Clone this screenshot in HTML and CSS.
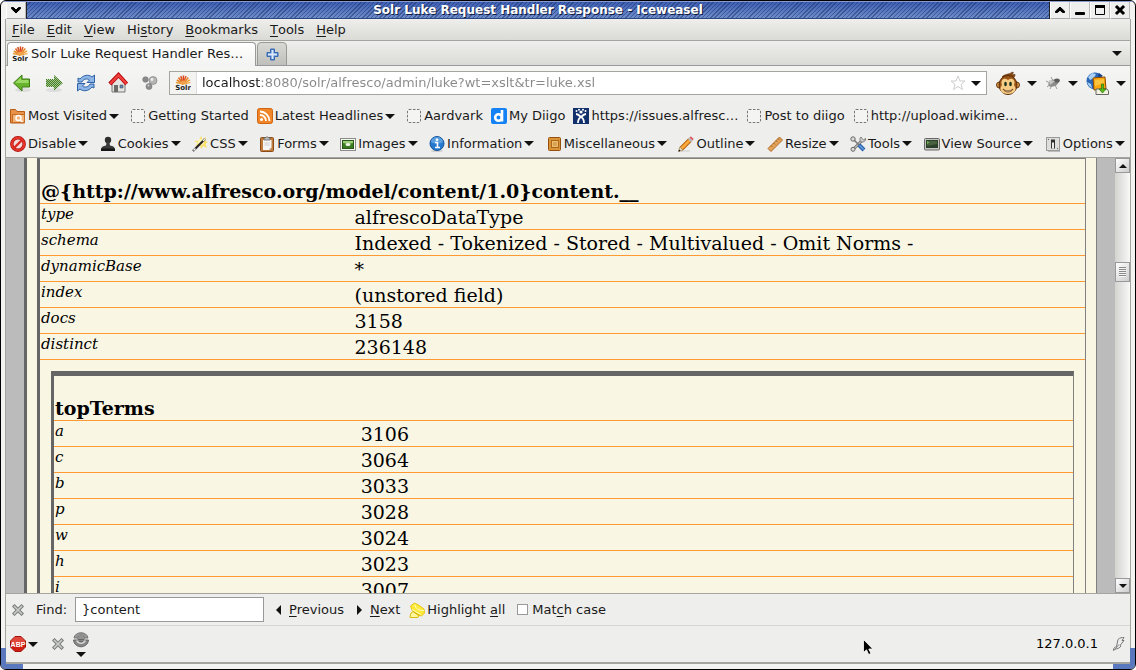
FILE: index.html
```html
<!DOCTYPE html>
<html lang="en">
<head>
<meta charset="utf-8">
<title>Solr Luke Request Handler Response - Iceweasel</title>
<link rel="stylesheet" href="styles.css">
</head>
<body>
<svg class="defs" aria-hidden="true">
  <symbol id="solr" viewBox="0 0 16 16">
    <g stroke-width="1.500" stroke-linecap="butt">
      <path d="M8 9L1 7.500" stroke="#e8a33a"/><path d="M8 9L1.800 5" stroke="#e58a2c"/>
      <path d="M8 9L3.500 2.500" stroke="#df6a24"/><path d="M8 9L5.800 1" stroke="#d9531e"/>
      <path d="M8 9L8.500 .5" stroke="#d9411e"/><path d="M8 9L11 1" stroke="#df5a22"/>
      <path d="M8 9L13.300 2.500" stroke="#e8812a"/><path d="M8 9L15 4.800" stroke="#f0a13a"/>
      <path d="M8 9L15.500 7.500" stroke="#f4b860"/>
    </g>
    <path d="M5 9a3.500 3.500 0 0 1 7 0z" fill="#f2a04a"/>
    <text x="8" y="15" class="solr-text">Solr</text>
  </symbol>
  <symbol id="blank" viewBox="0 0 16 16"><rect x="1.500" y="1.500" width="13" height="13" rx="1.500" fill="#f4f4f3" stroke="#777" stroke-dasharray="2.500 1.500"/></symbol>
  <symbol id="cross" viewBox="0 0 12 12"><path d="M2.500 2.500l7 7M9.500 2.500l-7 7" stroke="#777b76" stroke-width="3.600" stroke-linecap="square"/><path d="M2.500 2.500l7 7M9.500 2.500l-7 7" stroke="#c9ccc8" stroke-width="1.600" stroke-linecap="square"/></symbol>
</svg>
<div class="window">
  <header class="titlebar">
    <button class="wm" aria-label="Window menu"><svg width="12" height="8" viewBox="0 0 12 8"><path d="M1.500 1.500h2L6 4l2.500-2.500h2v1.200L6 7 1.500 2.700z" fill="#000" stroke="#000"/></svg></button>
    <h1 class="title">Solr Luke Request Handler Response - Iceweasel</h1>
    <div class="wm-group">
      <button class="wm" aria-label="Shade"><svg width="12" height="8" viewBox="0 0 12 8"><path d="M1.500 6.500h2L6 4.200l2.500 2.300h2V5.200L6 1 1.500 5.200z" fill="#000" stroke="#000"/></svg></button>
      <button class="wm" aria-label="Minimize"><svg width="12" height="12" viewBox="0 0 12 12"><rect x="1" y="8" width="10" height="3" rx="1"/></svg></button>
      <button class="wm" aria-label="Maximize"><svg width="12" height="12" viewBox="0 0 12 12"><path d="M1.500 1.500h9v9h-9z" fill="#eee" stroke="#000"/><path d="M1 1h10v3H1z"/></svg></button>
      <button class="wm" aria-label="Close"><svg width="12" height="12" viewBox="0 0 12 12"><path d="M3 3l6 6M9 3l-6 6" stroke="#000" stroke-width="3" stroke-linecap="square"/></svg></button>
    </div>
  </header>

  <div class="client">
    <nav class="menubar" aria-label="Menu">
      <button><u>F</u>ile</button><button><u>E</u>dit</button><button><u>V</u>iew</button><button>Hi<u>s</u>tory</button><button><u>B</u>ookmarks</button><button><u>T</u>ools</button><button><u>H</u>elp</button>
    </nav>

    <div class="tabbar">
      <button class="tab"><svg class="i16"><use href="#solr"/></svg><span>Solr Luke Request Handler Res…</span></button>
      <button class="newtab" aria-label="New tab"><svg width="13" height="13" viewBox="0 0 13 13"><path d="M4.500 1h4v3.500H12v4H8.500V12h-4V8.500H1v-4h3.500z" fill="#4a7fc8" stroke="#3668b0"/><path d="M6.500 2v9M2 6.500h9" stroke="#dce9fa" stroke-width="2"/></svg></button>
      <button class="alltabs" aria-label="List all tabs"><i class="down"></i></button>
    </div>

    <div class="navbar">
      <div class="navbuttons">
        <button aria-label="Back"><svg width="20" height="20" viewBox="0 0 20 20"><ellipse cx="11" cy="17" rx="8" ry="2" fill="#ddd"/><path d="M1.500 10L10 2v4h7.500v8H10v4z" fill="#67b32e" stroke="#3c7a12"/><path d="M3 10l6-5.800v2.800h7.500v3z" fill="#9bd863"/></svg></button>
        <button aria-label="Forward"><svg width="20" height="20" viewBox="0 0 20 20"><defs><pattern id="dots" width="2" height="2" patternUnits="userSpaceOnUse"><path d="M0 0h1v1H0zM1 1h1v1H1z" fill="#3f7c22"/></pattern></defs><ellipse cx="10" cy="17" rx="8" ry="2" fill="#ddd"/><path d="M18.500 10L10 2.500v4H2v7h8v4z" fill="#a5c68f"/><path d="M19 10L10 2v4H2v8h8v4z" fill="url(#dots)"/></svg></button>
        <button aria-label="Reload"><svg width="20" height="20" viewBox="0 0 20 20"><g id="half"><path d="M2 9V5l2 1c3-4 9-5 12-2l2.500-2v7.500H11L13.500 7C11 5 7 6 6 9z" fill="#8db6e6" stroke="#2f62a8"/></g><use href="#half" transform="rotate(180 10 10)"/></svg></button>
        <button aria-label="Home"><svg width="20" height="22" viewBox="0 0 20 22"><path d="M4 10v10h13V10l-6-6z" fill="#e5e5e2" stroke="#777"/><path d="M6 13h4v7H6z" fill="#6c6c68"/><path d="M12 13h3v3h-3z" fill="#5b86bd" stroke="#555" stroke-width=".6"/><path d="M1.800 12L10.500 3l8.200 9" fill="none" stroke="#b8060a" stroke-width="4"/><path d="M2.200 11.800L10.500 3.200l8 8.500" fill="none" stroke="#f1413f" stroke-width="2.200"/></svg></button>
        <button aria-label="Scatter"><svg width="20" height="20" viewBox="0 0 20 20"><g stroke="#777" stroke-width=".6"><circle cx="5.500" cy="6.500" r="2.800" fill="#8a8a8a"/><circle cx="13" cy="7.500" r="4" fill="#b5b5b5"/><circle cx="9" cy="13.500" r="3" fill="#8d8d8d"/></g><circle cx="12" cy="6.500" r="1.400" fill="#eee"/><circle cx="8.500" cy="12.500" r="1" fill="#ccc"/></svg></button>
      </div>
      <div class="urlbox">
        <span class="favicon"><svg class="i16"><use href="#solr"/></svg></span>
        <input class="url" aria-label="Location" value="localhost:8080/solr/alfresco/admin/luke?wt=xslt&amp;tr=luke.xsl">
        <button aria-label="Bookmark this page"><svg width="16" height="16" viewBox="0 0 16 16"><path d="M8 1l2 5h5l-4 3.500 1.500 5L8 11.500l-4.500 3L5 9.500 1 6h5z" fill="#fff" stroke="#ccc"/></svg></button>
        <button aria-label="Show history"><i class="down"></i></button>
      </div>
      <div class="addons">
        <button class="addon" aria-label="Greasemonkey"><svg width="24" height="25" viewBox="0 0 24 25"><path d="M6 6c2-3 6-2 11-5 1 1-1 2-1 3l3-.5c0 2-1 2-1 3z" fill="#8a4b14" stroke="#5b2e08" stroke-width=".7"/><circle cx="3.500" cy="14" r="3" fill="#dc9d54" stroke="#6a3508"/><circle cx="20.500" cy="14" r="3" fill="#dc9d54" stroke="#6a3508"/><ellipse cx="12" cy="14" rx="9" ry="9.500" fill="#9a5416" stroke="#5b2e08"/><path d="M12 9c4-3 8 0 6 5 4 5 0 9-6 9s-10-4-6-9c-2-5 2-8 6-5z" fill="#f5cd86"/><ellipse cx="9.500" cy="13" rx="1.300" ry="2.200" fill="#18331a"/><ellipse cx="14.500" cy="13" rx="1.300" ry="2.200" fill="#18331a"/><path d="M7 18c3 2.500 7 2.500 10 0-2 4-8 4-10 0z" fill="#fff" stroke="#6a3508" stroke-width=".8"/></svg><i class="down"></i></button>
        <button class="addon" aria-label="Firebug"><svg width="16" height="16" viewBox="0 0 16 16"><path d="M1 6l4 2M2 12l4-3M5 14l2-4M12 14l-2-4M6 2l2 4" stroke="#999"/><ellipse cx="8.500" cy="8" rx="5.500" ry="3.300" transform="rotate(-25 8.500 8)" fill="#8c8c8c"/><ellipse cx="12" cy="5.500" rx="2.800" ry="2" fill="#5c5c5c"/><path d="M4 5l6 1-5 4z" fill="#c7c7c7"/></svg><i class="down"></i></button>
        <button class="addon" aria-label="Download helper"><svg width="23" height="23" viewBox="0 0 23 23"><circle cx="9" cy="9" r="8.500" fill="#2a65b5"/><path d="M2 5l4-4 4 1-2 4-4 2zM1 10l4 2 1 4-3-2z" fill="#a9d0f0"/><path d="M13 1l4 3-5 1z" fill="#153f87"/><path d="M7 6l12-1 1 12-12 1z" fill="#fba70d" stroke="#8c4b00"/><path d="M9 8l9-1v4l-9 3z" fill="#ffc33c"/><path d="M10 17h11l1.500 2v3.500H10z" fill="#f4f3df" stroke="#666"/><path d="M15.500 12h2v5h2.500l-3.500 4-3.500-4h2.500z" fill="#57ba1c" stroke="#2c7208" stroke-width=".7"/></svg><i class="down"></i></button>
      </div>
    </div>

    <nav class="toolbar bookmarks" aria-label="Bookmarks">
      <button class="has-menu"><svg class="i16" viewBox="0 0 16 16"><path d="M.5 15V1.500h5l1.500 2h7.500V15z" fill="#e7924a" stroke="#bb5c12"/><path d="M2.500 6.500h12v8h-12z" fill="#f3b47a" stroke="#c46a22"/><circle cx="8.500" cy="10" r="2.500" fill="none" stroke="#fff" stroke-width="1.400"/><path d="M10.500 12l2 2" stroke="#fff" stroke-width="1.500"/></svg>Most Visited<i class="down"></i></button>
      <a href="#"><svg class="i16"><use href="#blank"/></svg>Getting Started</a>
      <button class="has-menu"><svg class="i16" viewBox="0 0 16 16"><rect x=".5" y=".5" width="15" height="15" rx="2" fill="#f08628" stroke="#cf6510"/><circle cx="4.500" cy="11.500" r="1.500" fill="#fff"/><path d="M3 7a6 6 0 0 1 6 6M3 3.500A9.500 9.500 0 0 1 12.500 13" fill="none" stroke="#fff" stroke-width="1.800"/></svg>Latest Headlines<i class="down"></i></button>
      <a href="#"><svg class="i16"><use href="#blank"/></svg>Aardvark</a>
      <a href="#"><svg class="i16" viewBox="0 0 16 16"><rect width="16" height="16" rx="2" fill="#1482f5"/><circle cx="7.500" cy="9.500" r="3.300" fill="none" stroke="#fff" stroke-width="2.600"/><path d="M11 2v11.500" stroke="#fff" stroke-width="2.600"/></svg>My Diigo</a>
      <a href="#"><svg class="i16" viewBox="0 0 16 16"><rect width="16" height="16" fill="#12306b"/><g fill="#fff"><circle cx="3.500" cy="3" r="1"/><circle cx="6" cy="1.700" r="1"/><circle cx="10" cy="1.700" r="1"/><circle cx="12.500" cy="3" r="1"/><circle cx="8" cy="4" r="1.600"/></g><path d="M3 6c2 0 4 2 5 3 1-1 3-3 5-3M8 9c-2 1-3 3-3 6M8 9c2 1 3 3 3 6" fill="none" stroke="#fff" stroke-width="1.800"/></svg>https://issues.alfresc…</a>
      <a href="#"><svg class="i16"><use href="#blank"/></svg>Post to diigo</a>
      <a href="#"><svg class="i16"><use href="#blank"/></svg>http://upload.wikime…</a>
    </nav>

    <div class="toolbar devbar">
      <button><svg class="i16" viewBox="0 0 16 16"><circle cx="8" cy="8" r="6.200" fill="#f6dcda" stroke="#a80f0b" stroke-width="3.400"/><circle cx="8" cy="8" r="6.200" fill="none" stroke="#e8352c" stroke-width="2"/><path d="M4 12l8-8" stroke="#d92820" stroke-width="2.400"/></svg>Disable<i class="down"></i></button>
      <button><svg class="i16" viewBox="0 0 16 16"><circle cx="8" cy="4" r="3.200" fill="#2e2e2e"/><path d="M6.500 6h3l.5 4h-4zM1 14c0-3 2-4 5-4.500h4c3 .5 5 1.500 5 4.500z" fill="#3a3a3a"/><path d="M1 12.500h14V15H1z" fill="#161616"/></svg>Cookies<i class="down"></i></button>
      <button><svg class="i16" viewBox="0 0 16 16"><path d="M9 0l1.500 3.500L14 1l-.5 4 2.500 1-2.500 2 1.500 4-4-2-2 3-1-4-5 1 3-3-4-2 5-.5z" fill="#fbe069"/><circle cx="9" cy="6" r="3" fill="#fff6b8"/><path d="M1 15L13 3" stroke="#222" stroke-width="2.200"/><path d="M1.500 14.500l2-2M11 5l2-2" stroke="#eee" stroke-width="1.600"/></svg>CSS<i class="down"></i></button>
      <button><svg class="i16" viewBox="0 0 16 16"><rect x="1.500" y="1.500" width="13" height="14" rx="1" fill="#c17b3c" stroke="#8a4d18"/><path d="M4 4h8.500v8l-2 2H4z" fill="#f5f5f4"/><path d="M12.500 12l-2 2v-2z" fill="#bbb"/><path d="M5 4V2l2-.5c0-1 2-1 2 0l2 .5v2z" fill="#bdbdbd" stroke="#666" stroke-width=".8"/><path d="M5.500 7h5M5.500 9h5" stroke="#ccc"/></svg>Forms<i class="down"></i></button>
      <button><svg class="i16" viewBox="0 0 16 16"><rect x=".5" y="2.500" width="15" height="12" fill="#f7f7f5" stroke="#8b8b88"/><rect x="2.500" y="4.500" width="11" height="8" fill="#3c7d22" stroke="#2a5518"/><path d="M3 5h10v2L8 8 3 7z" fill="#9bcf7a"/><ellipse cx="8" cy="8.500" rx="2.500" ry="1.500" fill="#f2f5e8"/></svg>Images<i class="down"></i></button>
      <button><svg class="i16" viewBox="0 0 16 16"><ellipse cx="8" cy="15" rx="6" ry="1" fill="#ccc"/><circle cx="8" cy="7.500" r="7" fill="#2679cf" stroke="#17549b"/><path d="M2 6a6 5 0 0 1 12 0c-3 2-9 2-12 0z" fill="#5a9fe0"/><path d="M6 6.500h2.500v5M6 11.500h5" stroke="#fff" stroke-width="1.600" fill="none"/><circle cx="8" cy="3.700" r="1.300" fill="#fff"/></svg>Information<i class="down"></i></button>
      <button><svg class="i16" viewBox="0 0 16 16"><rect x="2.500" y="1.500" width="12" height="13" rx="1" fill="#dc9338" stroke="#93530f"/><rect x="5.500" y="4.500" width="7" height="7" fill="#efbd6e" stroke="#a7661d"/><path d="M7 7h4M7 9h4" stroke="#c6883a"/></svg>Miscellaneous<i class="down"></i></button>
      <button><svg class="i16" viewBox="0 0 16 16"><path d="M3 15h9" stroke="#ccc"/><path d="M3.500 12.500L12 4" stroke="#b25d0c" stroke-width="4.600"/><path d="M3.500 12.500L12 4" stroke="#fba93a" stroke-width="2.800"/><path d="M11.500 4.500l1.500-1.500" stroke="#bbb" stroke-width="4.600"/><path d="M13 3l1.300-1.300" stroke="#db5b66" stroke-width="4"/><path d="M.5 15.500l1.300-4.500 3.200 3.200z" fill="#f3ddb5" stroke="#8c6b3d" stroke-width=".6"/><path d="M.5 15.500l.6-2 1.400 1.400z"/></svg>Outline<i class="down"></i></button>
      <button><svg class="i16" viewBox="0 0 16 16"><path d="M1 12.500L12.500 1 15.500 4 4 15.500z" fill="#e3a35b" stroke="#b06a24"/><path d="M4 9.500l1.500 1.500M6.500 7L8 8.500M9 4.500l1.500 1.500M11 2.500L12.500 4" stroke="#8c4f12" stroke-width=".8"/></svg>Resize<i class="down"></i></button>
      <button><svg class="i16" viewBox="0 0 16 16"><path d="M3 13.500L12 4.500" stroke="#777" stroke-width="2.600"/><path d="M3 13.500L12 4.500" stroke="#ddd"/><circle cx="3" cy="13.300" r="2" fill="#ddd" stroke="#666"/><path d="M11 1c-2 2-1 5 1 5s4-1 3.500-3.500L13.500 4 12 2.500z" fill="#d2d2d2" stroke="#666" stroke-width=".8"/><circle cx="3" cy="3" r="2.200" fill="#ddd" stroke="#666"/><path d="M4 4l5 5" stroke="#777" stroke-width="1.600"/><path d="M9 9l5 5" stroke="#2a62ad" stroke-width="4"/><path d="M9.500 9.500l4 4" stroke="#6ba3e2" stroke-width="1.500"/></svg>Tools<i class="down"></i></button>
      <button><svg class="i16" viewBox="0 0 16 16"><rect x=".5" y="2.500" width="15" height="11.500" rx="1" fill="#c5c5c2" stroke="#686866"/><rect x="2" y="4" width="12" height="8" fill="#2b402b"/><path d="M3 5h10v3L3 10z" fill="#48623f"/><path d="M3 5.500l1.500 1L3 7.500" stroke="#7fd957" fill="none"/></svg>View Source<i class="down"></i></button>
      <button><svg class="i16" viewBox="0 0 16 16"><path d="M3 15.500h12" stroke="#bbb"/><rect x="1.500" y="1.500" width="13" height="13" fill="#dededc" stroke="#999"/><rect x="6" y="3.500" width="4" height="9" fill="#333"/><path d="M7 6.500h2v6H7z" fill="#eee"/><circle cx="3.500" cy="3.500" r=".7" fill="#777"/><circle cx="12.500" cy="12.500" r=".7" fill="#777"/></svg>Options<i class="down"></i></button>
    </div>

    <div class="viewport">
      <main class="page">
        <div class="outer">
          <section class="field">
            <h2>@{http://www.alfresco.org/model/content/1.0}content.__</h2>
            <table>
              <tr><th>type</th><td>alfrescoDataType</td></tr>
              <tr><th>schema</th><td>Indexed - Tokenized - Stored - Multivalued - Omit Norms -</td></tr>
              <tr><th>dynamicBase</th><td>*</td></tr>
              <tr><th>index</th><td>(unstored field)</td></tr>
              <tr><th>docs</th><td>3158</td></tr>
              <tr><th>distinct</th><td>236148</td></tr>
            </table>
            <section class="terms">
              <h2>topTerms</h2>
              <table>
                <tr><th>a</th><td>3106</td></tr>
                <tr><th>c</th><td>3064</td></tr>
                <tr><th>b</th><td>3033</td></tr>
                <tr><th>p</th><td>3028</td></tr>
                <tr><th>w</th><td>3024</td></tr>
                <tr><th>h</th><td>3023</td></tr>
                <tr><th>i</th><td>3007</td></tr>
              </table>
            </section>
          </section>
        </div>
      </main>
      <div class="scrollbar">
        <button class="sb" aria-label="Scroll up"><i class="up small"></i></button>
        <div class="track"><div class="thumb"></div></div>
        <button class="sb" aria-label="Scroll down"><i class="down small"></i></button>
      </div>
    </div>

    <form class="findbar">
      <button type="button" class="close" aria-label="Close find bar"><svg width="12" height="12"><use href="#cross"/></svg></button>
      <label for="find">Find:</label>
      <input id="find" class="find" value="}content">
      <button type="button" class="prev"><i class="left"></i><span><u>P</u>revious</span></button>
      <button type="button" class="next"><i class="right"></i><span><u>N</u>ext</span></button>
      <button type="button" class="highlight"><svg class="i16" viewBox="0 0 16 16"><path d="M1 15l1-4 3-2 5 4-1 2.500H1z" fill="#fff6a0" stroke="#dcbc10"/><path d="M1.500 4l4-3 4 2 5.500 4 .5 4-3 3-4-1-5-4z" fill="#ffe937" stroke="#e6c61a"/><path d="M3 7.500l9 5M6 2.500c0 4 4 6 9 6" stroke="#fffbc8" fill="none"/><path d="M4 9.500l7 4" stroke="#cfa800" stroke-width=".8"/></svg><span>Highlight <u>a</u>ll</span></button>
      <label class="match"><input type="checkbox"><span>Mat<u>c</u>h case</span></label>
    </form>

    <footer class="statusbar">
      <button class="abp" aria-label="Adblock Plus"><svg class="i16" viewBox="0 0 16 16"><path d="M5 .5h6L15.500 5v6L11 15.500H5L.5 11V5z" fill="#cf1d12" stroke="#a0140c"/><path d="M5 1h6l4 4v2L1 9V5z" fill="#e0473a"/><text x="8" y="11" class="abp-text">ABP</text></svg><i class="down"></i></button>
      <button aria-label="Stop"><svg width="12" height="12"><use href="#cross"/></svg></button>
      <button class="stack" aria-label="Proxy"><svg class="i16" viewBox="0 0 16 16"><path d="M1 6c1-7 13-7 14 0z" fill="#9a9a9a" stroke="#777"/><ellipse cx="8" cy="6" rx="3.500" ry="3.500" fill="#6a6a6a"/><path d="M5.500 4h5M5 6h6" stroke="#bbb"/><path d="M.5 8h15c-1 9-14 9-15 0z" fill="#888" stroke="#666"/><path d="M3 8.500c1 4.500 9 4.500 10 0z" fill="#d5d5d5"/><path d="M5 8.500c1 2.500 5 2.500 6 0z" fill="#666"/></svg><i class="down"></i></button>
      <span class="ip">127.0.0.1</span>
      <button aria-label="Page info"><svg width="14" height="16" viewBox="0 0 14 16"><path d="M1.500 14.500c0-3 1-3 3-4l1.500-7c2-2 4-2 6-2l-2 3h2l-4 5 1 .5c-1 2-4 3-6 3z" fill="#eee" stroke="#777"/><path d="M2 14.500l5-6" stroke="#888"/></svg></button>
    </footer>
  </div>
  <div class="grip grip-left"></div>
  <div class="grip grip-right"></div>
</div>
<svg class="cursor" width="12" height="17" viewBox="0 0 12 17" aria-hidden="true"><path d="M.5.5v13l3-2.700 2.200 4.700 2.300-1-2.200-4.500h4z" fill="#000" stroke="#fff" stroke-width=".8"/></svg>
</body>
</html>
```
FILE: styles.css
```css
* { box-sizing: border-box; }
body { margin: 0; background: #fff; font: 13px/16px "DejaVu Sans", sans-serif; color: #1a1a1a; overflow: hidden; }
button { border: 0; margin: 0; padding: 0; background: none; font: inherit; color: inherit; display: flex; align-items: center; white-space: nowrap; }
a { color: inherit; text-decoration: none; display: flex; align-items: center; white-space: nowrap; }
u { text-decoration-thickness: 1px; text-underline-offset: 2px; }
input { font: inherit; }
svg { display: block; flex: none; }
.defs { position: absolute; width: 0; height: 0; }
.i16 { width: 16px; height: 16px; }
.solr-text { font: bold 7px "DejaVu Sans", sans-serif; fill: #222; text-anchor: middle; }
.abp-text { font: bold 7px "Liberation Sans Narrow", "Liberation Sans", sans-serif; fill: #fff; text-anchor: middle; }

.down, .up, .left, .right { flex: none; width: 0; height: 0; border: 5px solid transparent; }
.down { border-top-color: #111; border-bottom: 0; }
.up { border-bottom-color: #111; border-top: 0; }
.left { border-right-color: #111; border-left: 0; }
.right { border-left-color: #111; border-right: 0; }
.small { border-width: 4px; }

/* window frame */
.window { position: relative; height: 100vh; display: flex; flex-direction: column; border: 1px solid #000; border-radius: 6px; overflow: hidden; background: #f3f3f1; }
.titlebar { flex: none; height: 18px; display: flex; padding: 0 5px; border-top: 1px solid #8a9bd0; }
.wm { width: 20px; justify-content: center; background: #efefee; border-left: 1px solid #fff; border-right: 1px solid #bbb; border-bottom: 1px solid #aaa; }
.wm-group { display: flex; border-left: 1px solid #222; }
.title { flex: 1; margin: 0; text-align: center; font: bold 12px/16px "DejaVu Sans", sans-serif; color: #fff; text-shadow: 1px 1px 0 #111c40; border-left: 1px solid #222; border-bottom: 1px solid #2c4584;
  background: repeating-linear-gradient(135deg, transparent 0 2px, rgba(20, 40, 90, .45) 2px 3px), linear-gradient(#3d5fb4, #6f8dcb); }
.client { flex: 1; min-height: 0; display: flex; flex-direction: column; margin: 0 4px 5px; border: 1px solid #a5a5a0; border-top: 0; border-bottom-width: 2px; background: #eeeeec; }
.grip { position: absolute; bottom: 0; width: 22px; height: 21px; border: 0 solid #5a78bd; border-bottom-width: 5px; }
.grip-left { left: 0; border-left-width: 5px; }
.grip-right { right: 0; border-right-width: 5px; }

/* bars */
.menubar { flex: none; height: 22px; display: flex; gap: 12px; padding: 0 6px; background: linear-gradient(#eeeeec, #dadad6); border-bottom: 1px solid #a5a5a0; }
.tabbar { flex: none; height: 25px; display: flex; align-items: flex-end; gap: 1px; padding: 0 8px 0 1px; background: linear-gradient(#efefed, #d9d9d5); box-shadow: inset 0 -1px #999; }
.tab { height: 24px; width: 249px; gap: 3px; padding: 0 4px 2px; border: 1px solid #999; border-bottom: 0; border-radius: 4px 4px 0 0; background: linear-gradient(#fff, #f3f3f2); }
.newtab { width: 30px; height: 24px; justify-content: center; border: 1px solid #999; border-radius: 4px 4px 0 0; background: linear-gradient(#d8d8d5, #bfbfbc); }
.alltabs { margin-left: auto; align-self: center; }
.navbar { flex: none; height: 36px; display: flex; align-items: center; gap: 9px; padding: 0 4px 2px 6px; background: linear-gradient(#f5f5f4, #eeeeec); }
.navbuttons { display: flex; align-items: center; gap: 12px; }
.urlbox { flex: 1; height: 24px; display: flex; align-items: center; gap: 5px; padding-right: 5px; border: 1px solid #a5a5a0; background: #fff; }
.favicon { height: 22px; padding: 3px 5px; background: #f3f3f2; border-right: 1px solid #ddd; }
.url { flex: 1; min-width: 0; border: 0; padding: 0; outline: 0; color: transparent; background: linear-gradient(to right, #1a1a1a 59px, #888 59px); -webkit-background-clip: text; background-clip: text; }
.addons { display: flex; align-items: center; gap: 8px; }
.addon { gap: 7px; }
.toolbar { flex: none; height: 28px; display: flex; align-items: center; padding: 0 4px; }
.toolbar > * { gap: 2px; }
.bookmarks { gap: 8px; }
.bookmarks .has-menu { padding-right: 3px; }
.devbar { justify-content: space-between; padding-right: 5px; border-bottom: 1px solid #a5a5a0; }

/* page */
.viewport { flex: 1; min-height: 0; display: flex; background: #bbb; overflow: hidden; font-family: "DejaVu Serif", serif; color: #000; }
.page { flex: 1; min-width: 0; overflow: hidden; padding: 0 18px; }
.outer { padding: 0 10px; background: #faf6e4; border-left: 3px solid #666; border-right: 1px solid #808080; }
.field { padding-bottom: 12px; border: 1px solid #808080; border-left: 3px solid #666; }
.terms { margin: 11px 11px 0; border: 1px solid #808080; border-left: 3px solid #666; border-top: 5px solid #666; }
h2 { margin: 0; padding: 21px 1px 0; font-size: 19px; line-height: 23px; border-bottom: 1px solid #f93; }
table { width: 100%; table-layout: fixed; border-collapse: separate; border-spacing: 0; }
th, td { height: 26px; padding: 1px 1px 0; border-bottom: 1px solid #f93; text-align: left; vertical-align: top; font-weight: normal; white-space: nowrap; }
th { width: 30%; font-size: 15px; line-height: 19px; font-style: italic; }
td { font-size: 19px; line-height: 24px; }

.scrollbar { width: 15px; flex: none; display: flex; flex-direction: column; background: linear-gradient(to right, #d3d3d0, #f8f8f7); }
.sb { flex: none; height: 15px; justify-content: center; border: 1px solid #999; background: linear-gradient(135deg, #fff, #ccc); }
.track { flex: 1; padding-top: 89px; }
.thumb { height: 20px; border: 1px solid #999; background: repeating-linear-gradient(#888 0 1px, #f5f5f5 1px 2px) center / 7px 10px no-repeat, linear-gradient(135deg, #fff, #ccc); }

/* find and status bars */
.findbar { flex: none; height: 33px; display: flex; align-items: center; padding: 0 6px; border-top: 1px solid #a5a5a0; border-bottom: 1px solid #d5d5d2; }
.findbar label[for] { margin: 0 8px 0 12px; }
.find { width: 189px; height: 25px; padding: 0 6px; border: 1px solid #999; background: #fff; color: inherit; }
.prev { gap: 8px; margin-left: 12px; }
.next { gap: 8px; margin-left: 13px; }
.highlight { gap: 2px; margin-left: 9px; }
.match { display: flex; align-items: center; gap: 4px; margin-left: 12px; }
.match input { appearance: none; margin: 0; width: 11px; height: 11px; border: 1px solid #999; background: #fff; }
.statusbar { flex: none; height: 36px; display: flex; align-items: center; gap: 14px; padding: 0 4px; }
.abp { gap: 2px; }
.stack { flex-direction: column; gap: 4px; margin-left: -5px; }
.ip { margin-left: auto; color: #000; }
.cursor { position: absolute; left: 863px; top: 639px; }
```
